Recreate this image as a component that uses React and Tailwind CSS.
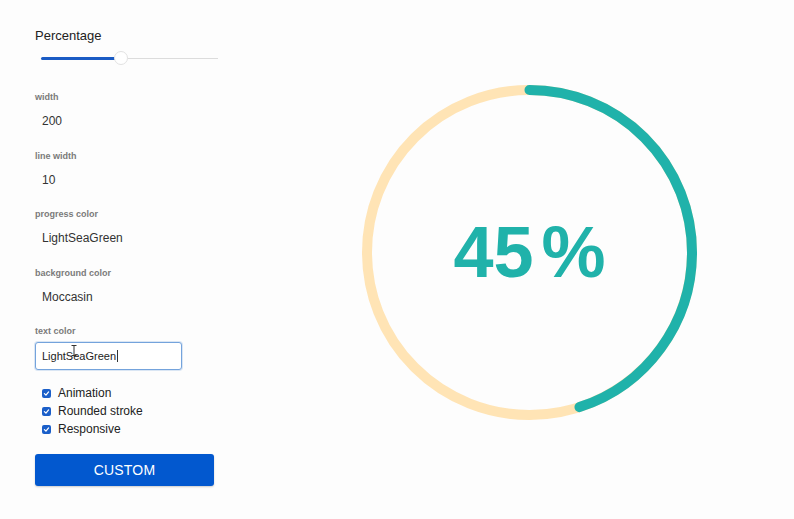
const fields = [
  { label: "width", value: "200" },
  { label: "line width", value: "10" },
  { label: "progress color", value: "LightSeaGreen" },
  { label: "background color", value: "Moccasin" },
];

const checks = ["Animation", "Rounded stroke", "Responsive"];

const Check = () => (
  <span className="w-[9px] h-[9px] rounded-[2px] bg-[#1b5fc9] flex items-center justify-center">
    <svg width="7" height="7" viewBox="0 0 10 10">
      <path d="M2 5.2 L4.2 7.3 L8 2.8" fill="none" stroke="white" strokeWidth="1.8" strokeLinecap="round" strokeLinejoin="round" />
    </svg>
  </span>
);

const CircleProgress = ({ percent }) => {
  const r = 162.5;
  const c = 2 * Math.PI * r;
  return (
    <svg width="345" height="345" viewBox="0 0 345 345">
      <circle cx="172.5" cy="172.5" r={r} fill="none" stroke="#FFE4B5" strokeWidth="10" />
      <circle
        cx="172.5"
        cy="172.5"
        r={r}
        fill="none"
        stroke="#20B2AA"
        strokeWidth="10"
        strokeLinecap="round"
        strokeDasharray={`${(c * percent) / 100} ${c}`}
        transform="rotate(-90 172.5 172.5)"
      />
      <text
        x="172.5"
        y="197"
        textAnchor="middle"
        fill="#20B2AA"
        fontSize="72"
        fontWeight="700"
        fontFamily="'Liberation Sans', Arial, sans-serif"
      >
        <tspan>45</tspan>
        <tspan dx="8">%</tspan>
      </text>
    </svg>
  );
};

export default function App() {
  return (
    <div className="w-[794px] h-[519px] bg-[#fdfdfd] flex font-['Liberation_Sans',Arial,sans-serif] overflow-hidden">
      {/* Panneau de réglages */}
      <div className="w-[260px] pl-[35px] pt-[28px] flex flex-col">
        <div className="h-[16px] leading-[16px] text-[13px] text-[#222]">Percentage</div>

        <div className="mt-[7px] h-[14px] w-[185px] relative flex items-center">
          <div className="ml-[6px] w-[75px] h-[3px] rounded-full bg-[#1a5bc4]" />
          <div className="w-[14px] h-[14px] rounded-full bg-white border border-[#e2e2e2] -ml-[2px]" />
          <div className="flex-1 h-[1px] bg-[#dcdcdc] mr-[2px]" />
        </div>

        <div className="mt-[26px] flex flex-col">
          {fields.map((f) => (
            <div key={f.label} className="h-[58.5px] flex flex-col">
              <div className="h-[12px] leading-[12px] text-[9px] font-bold text-[#7a7a7a]">{f.label}</div>
              <div className="mt-[11px] h-[14px] leading-[14px] pl-[7px] text-[12px] text-[#333]">{f.value}</div>
            </div>
          ))}

          <div className="h-[12px] leading-[12px] text-[9px] font-bold text-[#7a7a7a]">text color</div>
          <div className="relative mt-[5px] w-[147px] h-[28px] border border-[#74a3dc] rounded-[3px] bg-white flex items-center pl-[6px] shadow-[0_0_0_1px_rgba(116,163,220,0.25)]">
            <span className="text-[11px] text-[#222] leading-[14px]">LightSeaGreen</span>
            <span className="ml-[1px] w-[1px] h-[12px] bg-[#333]" />
            {/* curseur souris */}
            <svg className="absolute left-[35px] top-[2px]" width="6" height="11" viewBox="0 0 6 11">
              <path d="M0.5 0.5 H5.5 M3 0.5 V10.5 M0.5 10.5 H5.5" stroke="#333" strokeWidth="1" fill="none" />
            </svg>
          </div>

          <div className="mt-[14px] flex flex-col pl-[7px]">
            {checks.map((c) => (
              <div key={c} className="h-[18px] flex items-center gap-[7px] text-[12px] text-[#222]">
                <Check />
                <span>{c}</span>
              </div>
            ))}
          </div>

          <button className="mt-[16px] w-[179px] h-[32px] rounded-[3px] bg-[#0258cf] text-white text-[14px] tracking-[0.2px] shadow-[0_1px_2px_rgba(0,0,0,0.2)]">
            CUSTOM
          </button>
        </div>
      </div>

      {/* Cercle de progression */}
      <div className="ml-[97px] mt-[80px]">
        <CircleProgress percent={45} />
      </div>
    </div>
  );
}
